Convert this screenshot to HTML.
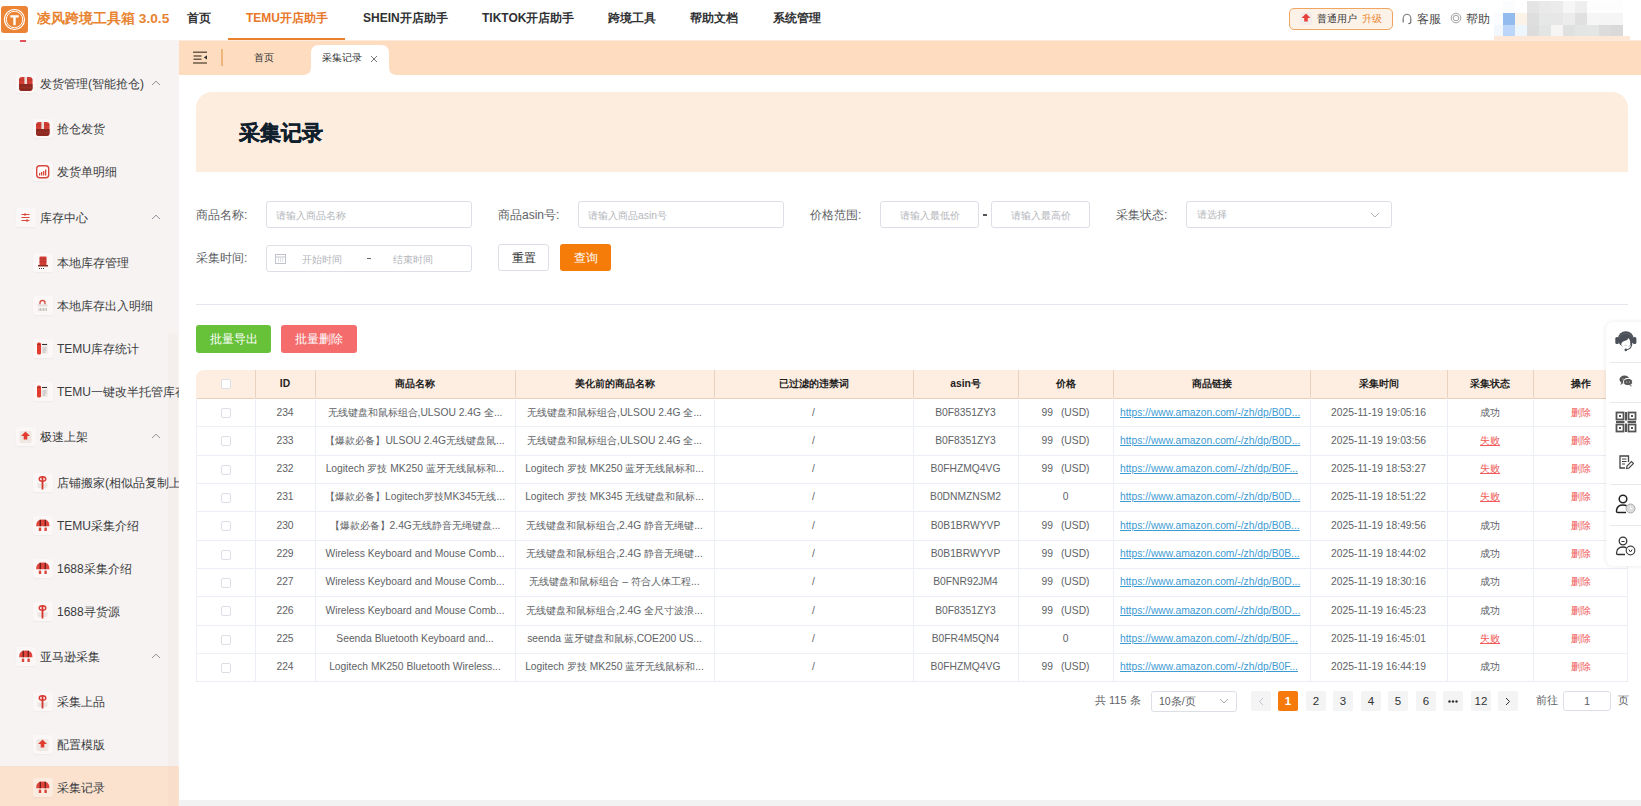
<!DOCTYPE html><html><head><meta charset="utf-8"><style>
*{box-sizing:border-box;margin:0;padding:0}
html,body{width:1641px;height:806px;overflow:hidden;background:#fff;font-family:"Liberation Sans", sans-serif;color:#606266}
.a{position:absolute;white-space:nowrap}
.hdr{position:absolute;left:0;top:0;width:1641px;height:40px;background:#fff}
.nav{position:absolute;top:11px;font-size:12px;font-weight:bold;color:#303133;line-height:14px}
.side{position:absolute;left:0;top:40px;width:179px;height:766px;background:#f7f3f2;overflow:hidden}
.si{position:absolute;font-size:12px;color:#3a3c40;line-height:14px;white-space:nowrap}
.ic{position:absolute;width:20px;height:19px;border-radius:2px;background:rgba(255,255,255,.35);box-shadow:0 1px 2px rgba(0,0,0,.04)}
.lbl{position:absolute;font-size:12px;color:#606266;line-height:14px}
.inp{position:absolute;border:1px solid #dcdfe6;border-radius:3px;background:#fff}
.ph{position:absolute;font-size:10.3px;color:#b4b6bb;line-height:14px;white-space:nowrap}
.th{position:absolute;font-size:10.3px;font-weight:bold;color:#1f1f1f;line-height:12px;text-align:center;white-space:nowrap}
.td{position:absolute;font-size:10.3px;color:#606266;line-height:12px;text-align:center;white-space:nowrap;overflow:hidden}
.pg{position:absolute;top:691px;width:20px;height:20px;border-radius:2px;background:#f4f4f5;font-size:11.5px;font-weight:normal;color:#303133;text-align:center;line-height:20px}
</style></head><body><div class="hdr"></div>
<div class="a" style="left:1px;top:6px;width:27px;height:27px;border-radius:3px;background:#ec8436"></div>
<svg class="a" style="left:1px;top:6px" width="27" height="27" viewBox="0 0 27 27"><circle cx="13.5" cy="13.5" r="10" fill="none" stroke="#fff" stroke-width="1.2"/><circle cx="13.5" cy="13.5" r="8.2" fill="none" stroke="#fff" stroke-width="1"/><path d="M9.3 9.3h8.4v2.3h-3v7.6h-2.4v-7.6h-3z" fill="#fff"/></svg>
<div class="a" style="left:37px;top:11px;font-size:13.7px;font-weight:bold;color:#e8832f;line-height:16px">凌风跨境工具箱 3.0.5</div>
<div class="nav" style="left:187px;color:#303133">首页</div>
<div class="nav" style="left:246px;color:#e8772a">TEMU开店助手</div>
<div class="nav" style="left:363px;color:#303133">SHEIN开店助手</div>
<div class="nav" style="left:482px;color:#303133">TIKTOK开店助手</div>
<div class="nav" style="left:608px;color:#303133">跨境工具</div>
<div class="nav" style="left:690px;color:#303133">帮助文档</div>
<div class="nav" style="left:773px;color:#303133">系统管理</div>
<div class="a" style="left:228px;top:38px;width:117px;height:2px;background:#e8802c"></div>
<div class="a" style="left:1289px;top:8px;width:104px;height:22px;border:1px solid #f0a660;border-radius:5px;background:#fdf2e8"></div>
<div class="a" style="left:1300px;top:12px;width:12px;height:13px;border-radius:2px;background:#f3ece8"></div>
<svg class="a" style="left:1300px;top:12px" width="12" height="13" viewBox="0 0 12 13"><path d="M6 1.5L10.5 6H7.8V9.5H4.2V6H1.5z" fill="#e8403a"/></svg>
<div class="a" style="left:1317px;top:13px;font-size:10.3px;color:#303133;line-height:12px">普通用户</div>
<div class="a" style="left:1362px;top:13px;font-size:10.3px;color:#e8862f;line-height:12px">升级</div>
<svg class="a" style="left:1401px;top:12px" width="12" height="13" viewBox="0 0 12 13"><path d="M2.2 8V6a3.8 3.8 0 0 1 7.6 0v2" fill="none" stroke="#666" stroke-width=".9"/><path d="M2.2 7.5v3M9.8 7.5v2.5q0 1.5-2.5 1.8" fill="none" stroke="#666" stroke-width="1.1"/></svg>
<div class="a" style="left:1417px;top:12px;font-size:12px;color:#4a4a4a;line-height:14px">客服</div>
<svg class="a" style="left:1450px;top:12px" width="12" height="12" viewBox="0 0 12 12"><circle cx="6" cy="6" r="4.8" fill="none" stroke="#999" stroke-width=".9"/><circle cx="6" cy="6" r="2.8" fill="none" stroke="#999" stroke-width=".9"/></svg>
<div class="a" style="left:1466px;top:12px;font-size:12px;color:#4a4a4a;line-height:14px">帮助</div>
<div class="a" style="left:1503px;top:1px;width:12px;height:12px;background:#fbfcfe"></div>
<div class="a" style="left:1515px;top:1px;width:12px;height:12px;background:#ffffff"></div>
<div class="a" style="left:1527px;top:1px;width:12px;height:12px;background:#e4e4e4"></div>
<div class="a" style="left:1539px;top:1px;width:12px;height:12px;background:#e9e9e9"></div>
<div class="a" style="left:1551px;top:1px;width:12px;height:12px;background:#ebebeb"></div>
<div class="a" style="left:1563px;top:1px;width:12px;height:12px;background:#f6f6f6"></div>
<div class="a" style="left:1575px;top:1px;width:12px;height:12px;background:#eeeeee"></div>
<div class="a" style="left:1587px;top:1px;width:12px;height:12px;background:#fdfdfd"></div>
<div class="a" style="left:1599px;top:1px;width:12px;height:12px;background:#fdfdfd"></div>
<div class="a" style="left:1611px;top:1px;width:12px;height:12px;background:#fdfdfd"></div>
<div class="a" style="left:1494px;top:13px;width:9px;height:12px;background:#fafcff"></div>
<div class="a" style="left:1503px;top:13px;width:12px;height:12px;background:#93bbee"></div>
<div class="a" style="left:1515px;top:13px;width:12px;height:12px;background:#fbf3e8"></div>
<div class="a" style="left:1527px;top:13px;width:12px;height:12px;background:#dedede"></div>
<div class="a" style="left:1539px;top:13px;width:12px;height:12px;background:#e6e7e7"></div>
<div class="a" style="left:1551px;top:13px;width:12px;height:12px;background:#e7e7e7"></div>
<div class="a" style="left:1563px;top:13px;width:12px;height:12px;background:#ececec"></div>
<div class="a" style="left:1575px;top:13px;width:12px;height:12px;background:#e0e0e0"></div>
<div class="a" style="left:1587px;top:13px;width:12px;height:12px;background:#f6f6f6"></div>
<div class="a" style="left:1599px;top:13px;width:12px;height:12px;background:#f5f5f5"></div>
<div class="a" style="left:1611px;top:13px;width:12px;height:12px;background:#f5f5f5"></div>
<div class="a" style="left:1494px;top:25px;width:9px;height:12px;background:#f2f7fd"></div>
<div class="a" style="left:1503px;top:25px;width:12px;height:12px;background:#bcd6f9"></div>
<div class="a" style="left:1515px;top:25px;width:12px;height:12px;background:#edf5fd"></div>
<div class="a" style="left:1527px;top:25px;width:12px;height:12px;background:#dcdcdc"></div>
<div class="a" style="left:1539px;top:25px;width:12px;height:12px;background:#e3e4e4"></div>
<div class="a" style="left:1551px;top:25px;width:12px;height:12px;background:#f6f5f3"></div>
<div class="a" style="left:1563px;top:25px;width:12px;height:12px;background:#dfe0e0"></div>
<div class="a" style="left:1575px;top:25px;width:12px;height:12px;background:#e3e4e4"></div>
<div class="a" style="left:1587px;top:25px;width:12px;height:12px;background:#e4e5e5"></div>
<div class="a" style="left:1599px;top:25px;width:12px;height:12px;background:#dcdcdc"></div>
<div class="a" style="left:1611px;top:25px;width:12px;height:12px;background:#d9d9d9"></div>
<div class="a" style="left:1494px;top:36px;width:136px;height:4px;background:#fde8d8"></div>
<div class="side"></div>
<div class="a" style="left:0;top:766px;width:179px;height:40px;background:#fbe2cf"></div>
<div class="a" style="left:168px;top:333px;width:10px;height:473px;background:rgba(120,80,60,.025);border-radius:4px 4px 0 0"></div>
<div class="a" style="left:0;top:0;width:179px;height:806px;overflow:hidden">
<div class="a" style="left:20px;top:40px;width:6px;height:2px;background:#e5505a"></div>
<div class="ic" style="left:16px;top:74px"></div><svg class="a" style="left:18px;top:76px" width="16" height="16" viewBox="0 0 16 16"><rect x="1" y="1" width="13.5" height="14" rx="3" fill="#d23d33"/><path d="M1 8h13.5v4a3 3 0 0 1-3 3H4a3 3 0 0 1-3-3z" fill="#8c2a22"/><path d="M1 4h13.5M1 11.5h13.5" stroke="#a8302a" stroke-width=".6"/><rect x="6.4" y="1" width="2.6" height="7" fill="#e9dfdb"/></svg>
<div class="si" style="left:40px;top:77px;color:#3a3c40">发货管理(智能抢仓)</div>
<svg class="a" style="left:151px;top:80px" width="10" height="6" viewBox="0 0 10 6"><path d="M1 5L5 1.2L9 5" fill="none" stroke="#909399" stroke-width="1"/></svg>
<div class="ic" style="left:33px;top:119px"></div><svg class="a" style="left:35px;top:121px" width="16" height="16" viewBox="0 0 16 16"><rect x="1" y="1" width="13.5" height="14" rx="3" fill="#d23d33"/><path d="M1 8h13.5v4a3 3 0 0 1-3 3H4a3 3 0 0 1-3-3z" fill="#8c2a22"/><path d="M1 4h13.5M1 11.5h13.5" stroke="#a8302a" stroke-width=".6"/><rect x="6.4" y="1" width="2.6" height="7" fill="#e9dfdb"/></svg>
<div class="si" style="left:57px;top:122px;color:#3a3c40">抢仓发货</div>
<div class="ic" style="left:33px;top:162px"></div><svg class="a" style="left:35px;top:164px" width="16" height="16" viewBox="0 0 16 16"><rect x="1.7" y="1.7" width="12" height="12" rx="3" fill="#fff" stroke="#d9463b" stroke-width="1.4"/><rect x="4" y="9" width="1.3" height="2.5" fill="#d9463b"/><rect x="6" y="8" width="1.3" height="3.5" fill="#d9463b"/><rect x="8" y="7" width="1.3" height="4.5" fill="#d9463b"/><rect x="10" y="5.5" width="1.3" height="6" fill="#d9463b"/></svg>
<div class="si" style="left:57px;top:165px;color:#3a3c40">发货单明细</div>
<div class="ic" style="left:16px;top:208px"></div><svg class="a" style="left:18px;top:210px" width="16" height="16" viewBox="0 0 16 16"><path d="M3.5 4.5h8M3.5 7.5h8M3.5 10.5h8" stroke="#d9463b" stroke-width="1.1"/><path d="M7 3v3M9 9v3" stroke="#d9463b" stroke-width="1"/></svg>
<div class="si" style="left:40px;top:211px;color:#3a3c40">库存中心</div>
<svg class="a" style="left:151px;top:214px" width="10" height="6" viewBox="0 0 10 6"><path d="M1 5L5 1.2L9 5" fill="none" stroke="#909399" stroke-width="1"/></svg>
<div class="ic" style="left:33px;top:253px"></div><svg class="a" style="left:35px;top:255px" width="16" height="16" viewBox="0 0 16 16"><rect x="4.5" y="1.5" width="7" height="9" rx="1" fill="#d23d33"/><path d="M4.5 4h7M4.5 6.5h7" stroke="#a8302a" stroke-width=".6"/><rect x="3" y="10" width="10" height="1.5" fill="#8c2a22"/><path d="M4 13.5h1M6 13.5h1M8 13.5h1" stroke="#444" stroke-width="1"/></svg>
<div class="si" style="left:57px;top:256px;color:#3a3c40">本地库存管理</div>
<div class="ic" style="left:33px;top:296px"></div><svg class="a" style="left:35px;top:298px" width="16" height="16" viewBox="0 0 16 16"><path d="M5 6.5V4.5a2.5 2 0 0 1 5 0v2" fill="none" stroke="#d9463b" stroke-width="1.3"/><path d="M2 6.5h11l-1 2H3z" fill="#e4dfdc"/><path d="M4 10v3M5.5 10v3M7 10v3M8.5 10v3M10 10v3M11.5 10v3" stroke="#bdb5b0" stroke-width=".8"/></svg>
<div class="si" style="left:57px;top:299px;color:#3a3c40">本地库存出入明细</div>
<div class="ic" style="left:33px;top:339px"></div><svg class="a" style="left:35px;top:341px" width="16" height="16" viewBox="0 0 16 16"><rect x="2" y="1.5" width="4" height="12" rx="1.5" fill="#e23b30"/><path d="M2.5 3.5h3" stroke="#8c2a22" stroke-width=".8"/><rect x="6" y="2" width="7" height="11" fill="#f1ece9"/><path d="M7 3.5h5" stroke="#333" stroke-width="1"/><path d="M7.5 7h4M7.5 9h4M7.5 11h3" stroke="#aaa" stroke-width=".8"/></svg>
<div class="si" style="left:57px;top:342px;color:#3a3c40">TEMU库存统计</div>
<div class="ic" style="left:33px;top:382px"></div><svg class="a" style="left:35px;top:384px" width="16" height="16" viewBox="0 0 16 16"><rect x="2" y="1.5" width="4" height="12" rx="1.5" fill="#e23b30"/><path d="M2.5 3.5h3" stroke="#8c2a22" stroke-width=".8"/><rect x="6" y="2" width="7" height="11" fill="#f1ece9"/><path d="M7 3.5h5" stroke="#333" stroke-width="1"/><path d="M7.5 7h4M7.5 9h4M7.5 11h3" stroke="#aaa" stroke-width=".8"/></svg>
<div class="si" style="left:57px;top:385px;color:#3a3c40">TEMU一键改半托管库存</div>
<div class="ic" style="left:16px;top:427px"></div><svg class="a" style="left:18px;top:429px" width="16" height="16" viewBox="0 0 16 16"><rect x="1.5" y="2" width="12" height="12" rx="2" fill="#eee7e2"/><path d="M7.5 2.5L12 7H9.3V10.5H5.7V7H3z" fill="#e23b30"/></svg>
<div class="si" style="left:40px;top:430px;color:#3a3c40">极速上架</div>
<svg class="a" style="left:151px;top:433px" width="10" height="6" viewBox="0 0 10 6"><path d="M1 5L5 1.2L9 5" fill="none" stroke="#909399" stroke-width="1"/></svg>
<div class="ic" style="left:33px;top:473px"></div><svg class="a" style="left:35px;top:475px" width="16" height="16" viewBox="0 0 16 16"><rect x="2.5" y="6" width="10" height="7" rx="1.5" fill="#ebe5e1"/><rect x="2.5" y="6" width="10" height="2.5" rx="1" fill="#fbf9f8"/><ellipse cx="7.5" cy="4" rx="3.3" ry="2.2" fill="none" stroke="#d93a35" stroke-width="1.4"/><rect x="6.6" y="1.5" width="1.8" height="13" fill="#d4362f"/></svg>
<div class="si" style="left:57px;top:476px;color:#3a3c40">店铺搬家(相似品复制上架)</div>
<div class="ic" style="left:33px;top:516px"></div><svg class="a" style="left:35px;top:518px" width="16" height="16" viewBox="0 0 16 16"><path d="M1.2 7.5Q1.2 1.6 7.8 1.6Q14.4 1.6 14.4 7.5V8.2H1.2z" fill="#e0463e"/><rect x="4.6" y="1.8" width="1.4" height="6.4" fill="#6d1f1a"/><rect x="9.6" y="1.8" width="1.4" height="6.4" fill="#6d1f1a"/><rect x="3.8" y="9.6" width="2.4" height="3.4" fill="#d9463b"/><rect x="9.4" y="9.6" width="2.4" height="3.4" fill="#d9463b"/></svg>
<div class="si" style="left:57px;top:519px;color:#3a3c40">TEMU采集介绍</div>
<div class="ic" style="left:33px;top:559px"></div><svg class="a" style="left:35px;top:561px" width="16" height="16" viewBox="0 0 16 16"><path d="M1.2 7.5Q1.2 1.6 7.8 1.6Q14.4 1.6 14.4 7.5V8.2H1.2z" fill="#e0463e"/><rect x="4.6" y="1.8" width="1.4" height="6.4" fill="#6d1f1a"/><rect x="9.6" y="1.8" width="1.4" height="6.4" fill="#6d1f1a"/><rect x="3.8" y="9.6" width="2.4" height="3.4" fill="#d9463b"/><rect x="9.4" y="9.6" width="2.4" height="3.4" fill="#d9463b"/></svg>
<div class="si" style="left:57px;top:562px;color:#3a3c40">1688采集介绍</div>
<div class="ic" style="left:33px;top:602px"></div><svg class="a" style="left:35px;top:604px" width="16" height="16" viewBox="0 0 16 16"><rect x="2.5" y="6" width="10" height="7" rx="1.5" fill="#ebe5e1"/><rect x="2.5" y="6" width="10" height="2.5" rx="1" fill="#fbf9f8"/><ellipse cx="7.5" cy="4" rx="3.3" ry="2.2" fill="none" stroke="#d93a35" stroke-width="1.4"/><rect x="6.6" y="1.5" width="1.8" height="13" fill="#d4362f"/></svg>
<div class="si" style="left:57px;top:605px;color:#3a3c40">1688寻货源</div>
<div class="ic" style="left:16px;top:647px"></div><svg class="a" style="left:18px;top:649px" width="16" height="16" viewBox="0 0 16 16"><path d="M1.2 7.5Q1.2 1.6 7.8 1.6Q14.4 1.6 14.4 7.5V8.2H1.2z" fill="#e0463e"/><rect x="4.6" y="1.8" width="1.4" height="6.4" fill="#6d1f1a"/><rect x="9.6" y="1.8" width="1.4" height="6.4" fill="#6d1f1a"/><rect x="3.8" y="9.6" width="2.4" height="3.4" fill="#d9463b"/><rect x="9.4" y="9.6" width="2.4" height="3.4" fill="#d9463b"/></svg>
<div class="si" style="left:40px;top:650px;color:#3a3c40">亚马逊采集</div>
<svg class="a" style="left:151px;top:653px" width="10" height="6" viewBox="0 0 10 6"><path d="M1 5L5 1.2L9 5" fill="none" stroke="#909399" stroke-width="1"/></svg>
<div class="ic" style="left:33px;top:692px"></div><svg class="a" style="left:35px;top:694px" width="16" height="16" viewBox="0 0 16 16"><rect x="2.5" y="6" width="10" height="7" rx="1.5" fill="#ebe5e1"/><rect x="2.5" y="6" width="10" height="2.5" rx="1" fill="#fbf9f8"/><ellipse cx="7.5" cy="4" rx="3.3" ry="2.2" fill="none" stroke="#d93a35" stroke-width="1.4"/><rect x="6.6" y="1.5" width="1.8" height="13" fill="#d4362f"/></svg>
<div class="si" style="left:57px;top:695px;color:#3a3c40">采集上品</div>
<div class="ic" style="left:33px;top:735px"></div><svg class="a" style="left:35px;top:737px" width="16" height="16" viewBox="0 0 16 16"><rect x="1.5" y="2" width="12" height="12" rx="2" fill="#eee7e2"/><path d="M7.5 2.5L12 7H9.3V10.5H5.7V7H3z" fill="#e23b30"/></svg>
<div class="si" style="left:57px;top:738px;color:#3a3c40">配置模版</div>
<div class="ic" style="left:33px;top:778px"></div><svg class="a" style="left:35px;top:780px" width="16" height="16" viewBox="0 0 16 16"><path d="M1.2 7.5Q1.2 1.6 7.8 1.6Q14.4 1.6 14.4 7.5V8.2H1.2z" fill="#e0463e"/><rect x="4.6" y="1.8" width="1.4" height="6.4" fill="#6d1f1a"/><rect x="9.6" y="1.8" width="1.4" height="6.4" fill="#6d1f1a"/><rect x="3.8" y="9.6" width="2.4" height="3.4" fill="#d9463b"/><rect x="9.4" y="9.6" width="2.4" height="3.4" fill="#d9463b"/></svg>
<div class="si" style="left:57px;top:781px;color:#3a3c40">采集记录</div>
</div>
<div class="a" style="left:179px;top:40px;width:1462px;height:35px;background:#fddcbf"></div>
<div class="a" style="left:179px;top:40px;width:1462px;height:1px;background:#feeadb"></div>
<svg class="a" style="left:193px;top:50px" width="15" height="15" viewBox="0 0 15 15"><path d="M0 2.2h14M0.5 6h8M0.5 9.2h8M0 13h14" stroke="#6e5c4c" stroke-width="1.4"/><path d="M14 5.3v4.3L10.8 7.5z" fill="#333"/></svg>
<div class="a" style="left:221px;top:49px;width:1.5px;height:17px;background:#eeb57a"></div>
<div class="a" style="left:254px;top:52px;font-size:10.3px;color:#303133;line-height:12px">首页</div>
<svg class="a" style="left:303px;top:45px" width="94" height="30" viewBox="0 0 94 30"><path d="M0 30 Q8 30 8 22 V8 Q8 0 16 0 H78 Q86 0 86 8 V22 Q86 30 94 30 Z" fill="#fff"/></svg>
<div class="a" style="left:322px;top:52px;font-size:10.3px;color:#303133;line-height:12px">采集记录</div>
<svg class="a" style="left:370px;top:55px" width="8" height="8" viewBox="0 0 8 8"><path d="M1 1L7 7M7 1L1 7" stroke="#666" stroke-width=".9"/></svg>
<div class="a" style="left:196px;top:92px;width:1432px;height:80px;background:#fdeddf;border-radius:16px 16px 0 0"></div>
<div class="a" style="left:239px;top:120.5px;font-size:21px;font-weight:bold;color:#10202c;line-height:23px;-webkit-text-stroke:0.45px #10202c">采集记录</div>
<div class="lbl" style="left:196px;top:208px">商品名称:</div>
<div class="inp" style="left:266px;top:201px;width:206px;height:27px"></div>
<div class="ph" style="left:276px;top:209px">请输入商品名称</div>
<div class="lbl" style="left:498px;top:208px">商品asin号:</div>
<div class="inp" style="left:578px;top:201px;width:206px;height:27px"></div>
<div class="ph" style="left:588px;top:209px">请输入商品asin号</div>
<div class="lbl" style="left:810px;top:208px">价格范围:</div>
<div class="inp" style="left:880px;top:201px;width:99px;height:27px"></div>
<div class="ph" style="left:880px;top:209px;width:99px;text-align:center">请输入最低价</div>
<div class="a" style="left:983px;top:214px;width:4px;height:1.5px;background:#555"></div>
<div class="inp" style="left:991px;top:201px;width:99px;height:27px"></div>
<div class="ph" style="left:991px;top:209px;width:99px;text-align:center">请输入最高价</div>
<div class="lbl" style="left:1116px;top:208px">采集状态:</div>
<div class="inp" style="left:1186px;top:201px;width:206px;height:27px"></div>
<div class="ph" style="left:1197px;top:208px">请选择</div>
<svg class="a" style="left:1370px;top:212px" width="10" height="6" viewBox="0 0 10 6"><path d="M1 1L5 5L9 1" fill="none" stroke="#b0b3b8" stroke-width="1"/></svg>
<div class="lbl" style="left:196px;top:251px">采集时间:</div>
<div class="inp" style="left:266px;top:245px;width:206px;height:27px"></div>
<svg class="a" style="left:275px;top:253px" width="11" height="11" viewBox="0 0 11 11"><rect x=".5" y="1.5" width="10" height="9" fill="none" stroke="#c0c4cc" stroke-width="1"/><path d="M.5 4h10M3 6h1M5 6h1M7 6h1M3 8h1M5 8h1M7 8h1" stroke="#c0c4cc" stroke-width="1"/></svg>
<div class="ph" style="left:302px;top:253px">开始时间</div>
<div class="a" style="left:367px;top:258px;width:4px;height:1.2px;background:#666"></div>
<div class="ph" style="left:393px;top:253px">结束时间</div>
<div class="a" style="left:498px;top:244px;width:51px;height:27px;border:1px solid #dcdfe6;border-radius:3px;background:#fff;font-size:12px;color:#303133;text-align:center;line-height:27px">重置</div>
<div class="a" style="left:560px;top:244px;width:51px;height:27px;border-radius:3px;background:#f67c0a;font-size:12px;color:#fff;text-align:center;line-height:29px">查询</div>
<div class="a" style="left:196px;top:304px;width:1432px;height:1px;background:#e4e7ed"></div>
<div class="a" style="left:196px;top:325px;width:75px;height:28px;border-radius:3px;background:#67c23a;font-size:12px;color:#fff;text-align:center;line-height:28px">批量导出</div>
<div class="a" style="left:281px;top:325px;width:76px;height:28px;border-radius:3px;background:#f56c6c;font-size:12px;color:#fff;text-align:center;line-height:28px">批量删除</div>
<div class="a" style="left:196px;top:370.0px;width:1432px;height:28.0px;background:#fdeee1;border-radius:8px 0 0 0"></div>
<div class="a" style="left:196px;top:398.0px;width:1432px;height:1px;background:#e9cdb7"></div>
<div class="a" style="left:255px;top:370.0px;width:1px;height:28.0px;background:#ead2bf"></div>
<div class="a" style="left:255px;top:398.0px;width:1px;height:283.29999999999995px;background:#ebeef5"></div>
<div class="a" style="left:315px;top:370.0px;width:1px;height:28.0px;background:#ead2bf"></div>
<div class="a" style="left:315px;top:398.0px;width:1px;height:283.29999999999995px;background:#ebeef5"></div>
<div class="a" style="left:515px;top:370.0px;width:1px;height:28.0px;background:#ead2bf"></div>
<div class="a" style="left:515px;top:398.0px;width:1px;height:283.29999999999995px;background:#ebeef5"></div>
<div class="a" style="left:714px;top:370.0px;width:1px;height:28.0px;background:#ead2bf"></div>
<div class="a" style="left:714px;top:398.0px;width:1px;height:283.29999999999995px;background:#ebeef5"></div>
<div class="a" style="left:913px;top:370.0px;width:1px;height:28.0px;background:#ead2bf"></div>
<div class="a" style="left:913px;top:398.0px;width:1px;height:283.29999999999995px;background:#ebeef5"></div>
<div class="a" style="left:1018px;top:370.0px;width:1px;height:28.0px;background:#ead2bf"></div>
<div class="a" style="left:1018px;top:398.0px;width:1px;height:283.29999999999995px;background:#ebeef5"></div>
<div class="a" style="left:1113px;top:370.0px;width:1px;height:28.0px;background:#ead2bf"></div>
<div class="a" style="left:1113px;top:398.0px;width:1px;height:283.29999999999995px;background:#ebeef5"></div>
<div class="a" style="left:1310px;top:370.0px;width:1px;height:28.0px;background:#ead2bf"></div>
<div class="a" style="left:1310px;top:398.0px;width:1px;height:283.29999999999995px;background:#ebeef5"></div>
<div class="a" style="left:1447px;top:370.0px;width:1px;height:28.0px;background:#ead2bf"></div>
<div class="a" style="left:1447px;top:398.0px;width:1px;height:283.29999999999995px;background:#ebeef5"></div>
<div class="a" style="left:1533px;top:370.0px;width:1px;height:28.0px;background:#ead2bf"></div>
<div class="a" style="left:1533px;top:398.0px;width:1px;height:283.29999999999995px;background:#ebeef5"></div>
<div class="a" style="left:196px;top:398.0px;width:1px;height:283.29999999999995px;background:#ebeef5"></div>
<div class="a" style="left:1627px;top:398.0px;width:1px;height:283.29999999999995px;background:#ebeef5"></div>
<div class="a" style="left:221px;top:379.0px;width:10px;height:10px;border:1px solid #dcdfe6;border-radius:2px;background:#fff"></div>
<div class="th" style="left:255px;top:378.0px;width:60px">ID</div>
<div class="th" style="left:315px;top:378.0px;width:200px">商品名称</div>
<div class="th" style="left:515px;top:378.0px;width:199px">美化前的商品名称</div>
<div class="th" style="left:714px;top:378.0px;width:199px">已过滤的违禁词</div>
<div class="th" style="left:913px;top:378.0px;width:105px">asin号</div>
<div class="th" style="left:1018px;top:378.0px;width:95px">价格</div>
<div class="th" style="left:1113px;top:378.0px;width:197px">商品链接</div>
<div class="th" style="left:1310px;top:378.0px;width:137px">采集时间</div>
<div class="th" style="left:1447px;top:378.0px;width:86px">采集状态</div>
<div class="th" style="left:1533px;top:378.0px;width:95px">操作</div>
<div class="a" style="left:196px;top:426.33px;width:1432px;height:1px;background:#ebeef5"></div>
<div class="a" style="left:221px;top:408.00px;width:10px;height:10px;border:1px solid #dcdfe6;border-radius:2px;background:#fff"></div>
<div class="td" style="left:261px;top:406.50px;width:48px">234</div>
<div class="td" style="left:321px;top:406.50px;width:188px">无线键盘和鼠标组合,ULSOU 2.4G 全...</div>
<div class="td" style="left:521px;top:406.50px;width:187px">无线键盘和鼠标组合,ULSOU 2.4G 全...</div>
<div class="td" style="left:720px;top:406.50px;width:187px">/</div>
<div class="td" style="left:919px;top:406.50px;width:93px">B0F8351ZY3</div>
<div class="td" style="left:1024px;top:406.50px;width:83px">99<span style="margin-left:8px">(USD)</span></div>
<div class="td" style="left:1120px;top:406.50px;width:183px;text-align:left;color:#3d9bd4;text-decoration:underline">https://www.amazon.com/-/zh/dp/B0D...</div>
<div class="td" style="left:1316px;top:406.50px;width:125px">2025-11-19 19:05:16</div>
<div class="td" style="left:1453px;top:406.50px;width:74px">成功</div>
<div class="td" style="left:1533px;top:406.50px;width:95px;color:#f05a5a">删除</div>
<div class="a" style="left:196px;top:454.66px;width:1432px;height:1px;background:#ebeef5"></div>
<div class="a" style="left:221px;top:436.33px;width:10px;height:10px;border:1px solid #dcdfe6;border-radius:2px;background:#fff"></div>
<div class="td" style="left:261px;top:434.83px;width:48px">233</div>
<div class="td" style="left:321px;top:434.83px;width:188px">【爆款必备】ULSOU 2.4G无线键盘鼠...</div>
<div class="td" style="left:521px;top:434.83px;width:187px">无线键盘和鼠标组合,ULSOU 2.4G 全...</div>
<div class="td" style="left:720px;top:434.83px;width:187px">/</div>
<div class="td" style="left:919px;top:434.83px;width:93px">B0F8351ZY3</div>
<div class="td" style="left:1024px;top:434.83px;width:83px">99<span style="margin-left:8px">(USD)</span></div>
<div class="td" style="left:1120px;top:434.83px;width:183px;text-align:left;color:#3d9bd4;text-decoration:underline">https://www.amazon.com/-/zh/dp/B0D...</div>
<div class="td" style="left:1316px;top:434.83px;width:125px">2025-11-19 19:03:56</div>
<div class="td" style="left:1447px;top:434.83px;width:86px;color:#f05a5a;text-decoration:underline">失败</div>
<div class="td" style="left:1533px;top:434.83px;width:95px;color:#f05a5a">删除</div>
<div class="a" style="left:196px;top:482.99px;width:1432px;height:1px;background:#ebeef5"></div>
<div class="a" style="left:221px;top:464.66px;width:10px;height:10px;border:1px solid #dcdfe6;border-radius:2px;background:#fff"></div>
<div class="td" style="left:261px;top:463.16px;width:48px">232</div>
<div class="td" style="left:321px;top:463.16px;width:188px">Logitech 罗技 MK250 蓝牙无线鼠标和...</div>
<div class="td" style="left:521px;top:463.16px;width:187px">Logitech 罗技 MK250 蓝牙无线鼠标和...</div>
<div class="td" style="left:720px;top:463.16px;width:187px">/</div>
<div class="td" style="left:919px;top:463.16px;width:93px">B0FHZMQ4VG</div>
<div class="td" style="left:1024px;top:463.16px;width:83px">99<span style="margin-left:8px">(USD)</span></div>
<div class="td" style="left:1120px;top:463.16px;width:183px;text-align:left;color:#3d9bd4;text-decoration:underline">https://www.amazon.com/-/zh/dp/B0F...</div>
<div class="td" style="left:1316px;top:463.16px;width:125px">2025-11-19 18:53:27</div>
<div class="td" style="left:1447px;top:463.16px;width:86px;color:#f05a5a;text-decoration:underline">失败</div>
<div class="td" style="left:1533px;top:463.16px;width:95px;color:#f05a5a">删除</div>
<div class="a" style="left:196px;top:511.32px;width:1432px;height:1px;background:#ebeef5"></div>
<div class="a" style="left:221px;top:492.99px;width:10px;height:10px;border:1px solid #dcdfe6;border-radius:2px;background:#fff"></div>
<div class="td" style="left:261px;top:491.49px;width:48px">231</div>
<div class="td" style="left:321px;top:491.49px;width:188px">【爆款必备】Logitech罗技MK345无线...</div>
<div class="td" style="left:521px;top:491.49px;width:187px">Logitech 罗技 MK345 无线键盘和鼠标...</div>
<div class="td" style="left:720px;top:491.49px;width:187px">/</div>
<div class="td" style="left:919px;top:491.49px;width:93px">B0DNMZNSM2</div>
<div class="td" style="left:1024px;top:491.49px;width:83px">0</div>
<div class="td" style="left:1120px;top:491.49px;width:183px;text-align:left;color:#3d9bd4;text-decoration:underline">https://www.amazon.com/-/zh/dp/B0D...</div>
<div class="td" style="left:1316px;top:491.49px;width:125px">2025-11-19 18:51:22</div>
<div class="td" style="left:1447px;top:491.49px;width:86px;color:#f05a5a;text-decoration:underline">失败</div>
<div class="td" style="left:1533px;top:491.49px;width:95px;color:#f05a5a">删除</div>
<div class="a" style="left:196px;top:539.65px;width:1432px;height:1px;background:#ebeef5"></div>
<div class="a" style="left:221px;top:521.32px;width:10px;height:10px;border:1px solid #dcdfe6;border-radius:2px;background:#fff"></div>
<div class="td" style="left:261px;top:519.82px;width:48px">230</div>
<div class="td" style="left:321px;top:519.82px;width:188px">【爆款必备】2.4G无线静音无绳键盘...</div>
<div class="td" style="left:521px;top:519.82px;width:187px">无线键盘和鼠标组合,2.4G 静音无绳键...</div>
<div class="td" style="left:720px;top:519.82px;width:187px">/</div>
<div class="td" style="left:919px;top:519.82px;width:93px">B0B1BRWYVP</div>
<div class="td" style="left:1024px;top:519.82px;width:83px">99<span style="margin-left:8px">(USD)</span></div>
<div class="td" style="left:1120px;top:519.82px;width:183px;text-align:left;color:#3d9bd4;text-decoration:underline">https://www.amazon.com/-/zh/dp/B0B...</div>
<div class="td" style="left:1316px;top:519.82px;width:125px">2025-11-19 18:49:56</div>
<div class="td" style="left:1453px;top:519.82px;width:74px">成功</div>
<div class="td" style="left:1533px;top:519.82px;width:95px;color:#f05a5a">删除</div>
<div class="a" style="left:196px;top:567.98px;width:1432px;height:1px;background:#ebeef5"></div>
<div class="a" style="left:221px;top:549.65px;width:10px;height:10px;border:1px solid #dcdfe6;border-radius:2px;background:#fff"></div>
<div class="td" style="left:261px;top:548.15px;width:48px">229</div>
<div class="td" style="left:321px;top:548.15px;width:188px">Wireless Keyboard and Mouse Comb...</div>
<div class="td" style="left:521px;top:548.15px;width:187px">无线键盘和鼠标组合,2.4G 静音无绳键...</div>
<div class="td" style="left:720px;top:548.15px;width:187px">/</div>
<div class="td" style="left:919px;top:548.15px;width:93px">B0B1BRWYVP</div>
<div class="td" style="left:1024px;top:548.15px;width:83px">99<span style="margin-left:8px">(USD)</span></div>
<div class="td" style="left:1120px;top:548.15px;width:183px;text-align:left;color:#3d9bd4;text-decoration:underline">https://www.amazon.com/-/zh/dp/B0B...</div>
<div class="td" style="left:1316px;top:548.15px;width:125px">2025-11-19 18:44:02</div>
<div class="td" style="left:1453px;top:548.15px;width:74px">成功</div>
<div class="td" style="left:1533px;top:548.15px;width:95px;color:#f05a5a">删除</div>
<div class="a" style="left:196px;top:596.31px;width:1432px;height:1px;background:#ebeef5"></div>
<div class="a" style="left:221px;top:577.98px;width:10px;height:10px;border:1px solid #dcdfe6;border-radius:2px;background:#fff"></div>
<div class="td" style="left:261px;top:576.48px;width:48px">227</div>
<div class="td" style="left:321px;top:576.48px;width:188px">Wireless Keyboard and Mouse Comb...</div>
<div class="td" style="left:521px;top:576.48px;width:187px">无线键盘和鼠标组合 – 符合人体工程...</div>
<div class="td" style="left:720px;top:576.48px;width:187px">/</div>
<div class="td" style="left:919px;top:576.48px;width:93px">B0FNR92JM4</div>
<div class="td" style="left:1024px;top:576.48px;width:83px">99<span style="margin-left:8px">(USD)</span></div>
<div class="td" style="left:1120px;top:576.48px;width:183px;text-align:left;color:#3d9bd4;text-decoration:underline">https://www.amazon.com/-/zh/dp/B0D...</div>
<div class="td" style="left:1316px;top:576.48px;width:125px">2025-11-19 18:30:16</div>
<div class="td" style="left:1453px;top:576.48px;width:74px">成功</div>
<div class="td" style="left:1533px;top:576.48px;width:95px;color:#f05a5a">删除</div>
<div class="a" style="left:196px;top:624.64px;width:1432px;height:1px;background:#ebeef5"></div>
<div class="a" style="left:221px;top:606.31px;width:10px;height:10px;border:1px solid #dcdfe6;border-radius:2px;background:#fff"></div>
<div class="td" style="left:261px;top:604.81px;width:48px">226</div>
<div class="td" style="left:321px;top:604.81px;width:188px">Wireless Keyboard and Mouse Comb...</div>
<div class="td" style="left:521px;top:604.81px;width:187px">无线键盘和鼠标组合,2.4G 全尺寸波浪...</div>
<div class="td" style="left:720px;top:604.81px;width:187px">/</div>
<div class="td" style="left:919px;top:604.81px;width:93px">B0F8351ZY3</div>
<div class="td" style="left:1024px;top:604.81px;width:83px">99<span style="margin-left:8px">(USD)</span></div>
<div class="td" style="left:1120px;top:604.81px;width:183px;text-align:left;color:#3d9bd4;text-decoration:underline">https://www.amazon.com/-/zh/dp/B0D...</div>
<div class="td" style="left:1316px;top:604.81px;width:125px">2025-11-19 16:45:23</div>
<div class="td" style="left:1453px;top:604.81px;width:74px">成功</div>
<div class="td" style="left:1533px;top:604.81px;width:95px;color:#f05a5a">删除</div>
<div class="a" style="left:196px;top:652.97px;width:1432px;height:1px;background:#ebeef5"></div>
<div class="a" style="left:221px;top:634.64px;width:10px;height:10px;border:1px solid #dcdfe6;border-radius:2px;background:#fff"></div>
<div class="td" style="left:261px;top:633.14px;width:48px">225</div>
<div class="td" style="left:321px;top:633.14px;width:188px">Seenda Bluetooth Keyboard and...</div>
<div class="td" style="left:521px;top:633.14px;width:187px">seenda 蓝牙键盘和鼠标,COE200 US...</div>
<div class="td" style="left:720px;top:633.14px;width:187px">/</div>
<div class="td" style="left:919px;top:633.14px;width:93px">B0FR4M5QN4</div>
<div class="td" style="left:1024px;top:633.14px;width:83px">0</div>
<div class="td" style="left:1120px;top:633.14px;width:183px;text-align:left;color:#3d9bd4;text-decoration:underline">https://www.amazon.com/-/zh/dp/B0F...</div>
<div class="td" style="left:1316px;top:633.14px;width:125px">2025-11-19 16:45:01</div>
<div class="td" style="left:1447px;top:633.14px;width:86px;color:#f05a5a;text-decoration:underline">失败</div>
<div class="td" style="left:1533px;top:633.14px;width:95px;color:#f05a5a">删除</div>
<div class="a" style="left:196px;top:681.30px;width:1432px;height:1px;background:#ebeef5"></div>
<div class="a" style="left:221px;top:662.97px;width:10px;height:10px;border:1px solid #dcdfe6;border-radius:2px;background:#fff"></div>
<div class="td" style="left:261px;top:661.47px;width:48px">224</div>
<div class="td" style="left:321px;top:661.47px;width:188px">Logitech MK250 Bluetooth Wireless...</div>
<div class="td" style="left:521px;top:661.47px;width:187px">Logitech 罗技 MK250 蓝牙无线鼠标和...</div>
<div class="td" style="left:720px;top:661.47px;width:187px">/</div>
<div class="td" style="left:919px;top:661.47px;width:93px">B0FHZMQ4VG</div>
<div class="td" style="left:1024px;top:661.47px;width:83px">99<span style="margin-left:8px">(USD)</span></div>
<div class="td" style="left:1120px;top:661.47px;width:183px;text-align:left;color:#3d9bd4;text-decoration:underline">https://www.amazon.com/-/zh/dp/B0F...</div>
<div class="td" style="left:1316px;top:661.47px;width:125px">2025-11-19 16:44:19</div>
<div class="td" style="left:1453px;top:661.47px;width:74px">成功</div>
<div class="td" style="left:1533px;top:661.47px;width:95px;color:#f05a5a">删除</div>
<div class="a" style="left:1095px;top:694px;font-size:11px;color:#606266;line-height:13px">共 115 条</div>
<div class="inp" style="left:1151px;top:691px;width:86px;height:21px"></div>
<div class="a" style="left:1159px;top:695px;font-size:10.5px;color:#606266;line-height:13px">10条/页</div>
<svg class="a" style="left:1219px;top:698px" width="10" height="6" viewBox="0 0 10 6"><path d="M1 1L5 5L9 1" fill="none" stroke="#a8abb2" stroke-width="1"/></svg>
<div class="pg" style="left:1251px"><svg style="position:absolute;left:7px;top:6px" width="6" height="9" viewBox="0 0 6 9"><path d="M5 1L1.5 4.5L5 8" fill="none" stroke="#c0c4cc" stroke-width="1"/></svg></div>
<div class="pg" style="left:1278px;background:#f57a0b;color:#fff;font-weight:bold">1</div>
<div class="pg" style="left:1306px">2</div>
<div class="pg" style="left:1333px">3</div>
<div class="pg" style="left:1361px">4</div>
<div class="pg" style="left:1388px">5</div>
<div class="pg" style="left:1416px">6</div>
<div class="pg" style="left:1443px"><svg style="position:absolute;left:5px;top:9px" width="10" height="3" viewBox="0 0 10 3"><circle cx="1.5" cy="1.5" r="1.2" fill="#303133"/><circle cx="5" cy="1.5" r="1.2" fill="#303133"/><circle cx="8.5" cy="1.5" r="1.2" fill="#303133"/></svg></div>
<div class="pg" style="left:1471px">12</div>
<div class="pg" style="left:1498px"><svg style="position:absolute;left:7px;top:6px" width="6" height="9" viewBox="0 0 6 9"><path d="M1 1L4.5 4.5L1 8" fill="none" stroke="#303133" stroke-width="1"/></svg></div>
<div class="a" style="left:1536px;top:694px;font-size:10.5px;color:#606266;line-height:13px">前往</div>
<div class="inp" style="left:1563px;top:691px;width:48px;height:20px;font-size:11px;color:#606266;text-align:center;line-height:18px">1</div>
<div class="a" style="left:1618px;top:694px;font-size:10.5px;color:#606266;line-height:13px">页</div>
<div class="a" style="left:1606px;top:322px;width:45px;height:244px;background:#fff;border-radius:8px 0 0 8px;box-shadow:0 0 5px rgba(0,0,0,.09)"></div>
<div class="a" style="left:1610px;top:362px;width:31px;height:1px;background:#e8e8e8"></div>
<div class="a" style="left:1610px;top:402px;width:31px;height:1px;background:#e8e8e8"></div>
<div class="a" style="left:1610px;top:484px;width:31px;height:1px;background:#e8e8e8"></div>
<div class="a" style="left:1610px;top:525px;width:31px;height:1px;background:#e8e8e8"></div>
<svg class="a" style="left:1615px;top:330px" width="22" height="22" viewBox="0 0 22 22"><circle cx="10.8" cy="9.2" r="8" fill="#4b5058"/><path d="M4 8.5a7 6.5 0 0 1 13.6 0" fill="none" stroke="#6a6f77" stroke-width=".7"/><rect x="0.3" y="7" width="3.6" height="7" rx="1.6" fill="#4b5058"/><rect x="17.8" y="7" width="3.6" height="7" rx="1.6" fill="#4b5058"/><path d="M6.2 14.5Q6.5 11.5 9.5 11Q12.5 10.5 13.8 8Q15.6 10.5 15.3 14.5Q14 17.6 10.8 17.8Q8 17.8 6.2 14.5z" fill="#fff"/><path d="M9.5 15.5h2.6" stroke="#bbb" stroke-width=".6"/><path d="M16.8 14Q16.5 19 11.5 19.8" fill="none" stroke="#4b5058" stroke-width="1.1"/><circle cx="10.8" cy="19.9" r="1.3" fill="#4b5058"/></svg>
<svg class="a" style="left:1619px;top:375px" width="14" height="12" viewBox="0 0 14 12"><ellipse cx="5.5" cy="4.5" rx="5" ry="4" fill="#555"/><path d="M2 8l-.5 2 2.5-1.5z" fill="#555"/><ellipse cx="9" cy="7" rx="4.5" ry="3.6" fill="#555" stroke="#fff" stroke-width="1"/><path d="M12 10l1 1.5-2.5-.8z" fill="#555"/><circle cx="4" cy="4" r=".6" fill="#fff"/><circle cx="7" cy="4" r=".6" fill="#fff"/><circle cx="7.8" cy="7" r=".5" fill="#fff"/><circle cx="10.3" cy="7" r=".5" fill="#fff"/></svg>
<svg class="a" style="left:1615px;top:411px" width="22" height="22" viewBox="0 0 22 22"><g fill="none" stroke="#555" stroke-width="1.8"><rect x="1.5" y="1.5" width="7" height="7"/><rect x="13.5" y="1.5" width="7" height="7"/><rect x="1.5" y="13.5" width="7" height="7"/><rect x="13.5" y="13.5" width="7" height="7"/></g><g fill="#555"><rect x="4" y="4" width="2" height="2"/><rect x="16" y="4" width="2" height="2"/><rect x="4" y="16" width="2" height="2"/><rect x="16" y="16" width="2" height="2"/><rect x="10" y="1" width="2" height="20"/><rect x="1" y="10" width="20" height="2"/></g><rect x="9.5" y="9.5" width="3" height="3" fill="#fff"/></svg>
<svg class="a" style="left:1618px;top:454px" width="16" height="16" viewBox="0 0 16 16"><path d="M10.5 8V2H2v12h5" fill="none" stroke="#444" stroke-width="1.3"/><path d="M4 5h4.5M4 7.5h4.5M4 10h3" stroke="#444" stroke-width="1.1"/><path d="M8.5 14.5l.5-2.5 4.5-4.5 2 2-4.5 4.5z" fill="none" stroke="#444" stroke-width="1.1"/></svg>
<svg class="a" style="left:1615px;top:494px" width="22" height="20" viewBox="0 0 22 20"><circle cx="8" cy="5" r="3.8" fill="none" stroke="#222" stroke-width="1.5"/><path d="M12 12.2Q10.5 11 8 11 1.5 11 1.5 17.5 1.5 18.5 3 18.5H11" fill="none" stroke="#222" stroke-width="1.5"/><circle cx="15.5" cy="14.5" r="4.5" fill="#ddd" stroke="#aaa" stroke-width="1"/><path d="M15.5 12.5v2.2h1.8" fill="none" stroke="#fff" stroke-width=".9"/></svg>
<svg class="a" style="left:1615px;top:536px" width="22" height="20" viewBox="0 0 22 20"><circle cx="8" cy="5" r="3.8" fill="none" stroke="#333" stroke-width="1.3"/><path d="M6.5 5.5h3" stroke="#333" stroke-width="1"/><path d="M11.5 12Q10 11 8 11 1.5 11 1.5 17.5 1.5 18.5 3 18.5H10" fill="none" stroke="#333" stroke-width="1.3"/><circle cx="15.5" cy="14.5" r="4.3" fill="#fff" stroke="#444" stroke-width="1.2"/><path d="M13.8 13.5l1.7 2.5 1.7-2.5" fill="none" stroke="#333" stroke-width="1"/></svg>
<div class="a" style="left:179px;top:800px;width:1462px;height:6px;background:#f2f2f2"></div></body></html>
